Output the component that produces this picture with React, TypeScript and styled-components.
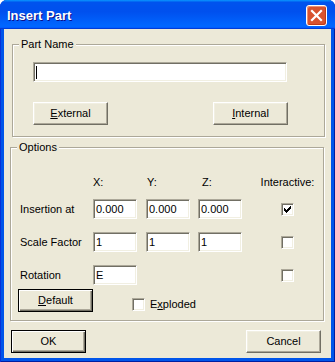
import React from "react";
import styled, { createGlobalStyle, css } from "styled-components";

const GlobalStyle = createGlobalStyle`
  html, body { margin: 0; padding: 0; background: #ffffff; }
  body { font-family: "Liberation Sans", Arial, sans-serif; }
`;

const Window = styled.div`
  width: 335px;
  height: 362px;
  box-sizing: border-box;
  display: flex;
  flex-direction: column;
  background: #0055ea;
  border-radius: 7px 7px 0 0;
  overflow: hidden;
  box-shadow: inset 1px 0 #0831d9, inset -1px 0 #001ea0, inset 0 -1px #001ea0;
`;

const TitleBar = styled.div`
  height: 29px;
  flex: none;
  box-sizing: border-box;
  display: flex;
  align-items: flex-start;
  justify-content: space-between;
  padding: 5px 8px 0 7px;
  background: linear-gradient(
    180deg,
    #0997ff 0,
    #0053ee 8%,
    #0050ee 40%,
    #0066ff 88%,
    #0066ff 93%,
    #005bff 95%,
    #003dd7 96%,
    #003dd7 100%
  );
`;

const Title = styled.span`
  font: bold 13px/21px "Liberation Sans", Arial, sans-serif;
  color: #ffffff;
  text-shadow: 1px 1px #0f1089;
`;

const CloseButton = styled.span`
  width: 21px;
  height: 21px;
  flex: none;
  box-sizing: border-box;
  border: 1px solid #ffffff;
  border-radius: 3px;
  background: #d8532f;
  box-shadow: inset 1px 1px #eb8f73, inset -1px -1px #c03a18;
  display: flex;
  align-items: center;
  justify-content: center;
`;

const Client = styled.div`
  flex: 1;
  margin: 0 4px 4px;
  background: #ece9d8;
  display: flex;
  flex-direction: column;
  padding-top: 9px;
  box-sizing: border-box;
  font-size: 11px;
  line-height: 13px;
  color: #000000;
`;

const Group = styled.fieldset<{ $left: number; $width: number; $top?: number }>`
  margin: ${(p) => p.$top ?? 0}px 0 0 ${(p) => p.$left}px;
  width: ${(p) => p.$width}px;
  min-width: 0;
  box-sizing: border-box;
  padding: 0;
  border: 1px solid #aca899;
  box-shadow: inset 1px 1px #ffffff, 1px 1px #ffffff;
`;

const Legend = styled.legend`
  margin-left: 6px;
  padding: 0 2px;
  font-size: 11px;
  line-height: 13px;
  background: #ece9d8;
`;

const GroupBody = styled.div<{ $pad: string }>`
  padding: ${(p) => p.$pad};
  display: flex;
  flex-direction: column;
`;

const TextBox = styled.div<{ $w: number }>`
  width: ${(p) => p.$w}px;
  height: 20px;
  box-sizing: border-box;
  background: #ffffff;
  border: 1px solid;
  border-color: #aca899 #ffffff #ffffff #aca899;
  box-shadow: inset 1px 1px #716f64, inset -1px -1px #f1efe2;
  padding: 0 2px;
  display: flex;
  align-items: center;
  font-size: 11px;
  white-space: nowrap;
`;

const Caret = styled.span`
  width: 1px;
  height: 13px;
  background: #000000;
`;

const ButtonRow = styled.div<{ $top: number }>`
  display: flex;
  justify-content: space-between;
  margin-top: ${(p) => p.$top}px;
`;

const Button = styled.button<{ $default?: boolean }>`
  width: 75px;
  height: 23px;
  flex: none;
  box-sizing: border-box;
  padding: 0;
  margin: 0;
  font: 11px/13px "Liberation Sans", Arial, sans-serif;
  color: #000000;
  background: #ece9d8;
  border: 1px solid;
  border-color: #ffffff #716f64 #716f64 #ffffff;
  box-shadow: inset -1px -1px #aca899, inset 1px 1px #f1efe2;
  ${(p) =>
    p.$default &&
    css`
      border-color: #000000;
      box-shadow: inset 1px 1px #ffffff, inset -1px -1px #716f64,
        inset -2px -2px #aca899;
    `}
`;

const columns = css`
  display: grid;
  grid-template-columns: 73px 53px 52px 60px 59px;
`;

const HeaderRow = styled.div`
  ${columns};
  margin-bottom: 10px;
`;

const HeaderCell = styled.span<{ $offset?: number; $center?: boolean }>`
  padding-left: ${(p) => p.$offset ?? 0}px;
  text-align: ${(p) => (p.$center ? "center" : "left")};
  white-space: nowrap;
`;

const FieldGrid = styled.div`
  ${columns};
  grid-template-rows: repeat(3, 20px);
  row-gap: 13px;
  align-items: center;
`;

const RowLabel = styled.span`
  grid-column: 1;
  white-space: nowrap;
`;

const Spacer = styled.span<{ $span: number }>`
  grid-column: span ${(p) => p.$span};
`;

const CheckCell = styled.span`
  grid-column: 5;
  justify-self: center;
  display: flex;
`;

const CheckBox = styled.span`
  width: 13px;
  height: 13px;
  box-sizing: border-box;
  flex: none;
  background: #ffffff;
  border: 1px solid;
  border-color: #aca899 #ffffff #ffffff #aca899;
  box-shadow: inset 1px 1px #716f64, inset -1px -1px #f1efe2;
  display: flex;
  align-items: center;
  justify-content: center;
`;

const OptionsFooter = styled.div`
  display: flex;
  align-items: flex-start;
  margin: 4px 0 0 -2px;
`;

const CheckLabel = styled.label`
  display: flex;
  align-items: center;
  gap: 5px;
  margin: 9px 0 0 39px;
`;

const DialogButtons = styled.div`
  display: flex;
  justify-content: space-between;
  padding: 0 10px 0 7px;
  margin-top: 9px;
`;

const CheckMark = () => (
  <svg width="9" height="9" viewBox="0 0 9 9" shapeRendering="crispEdges">
    <path
      d="M1 3h1v3H1z M2 4h1v3H2z M3 5h1v3H3z M4 4h1v3H4z M5 3h1v3H5z M6 2h1v3H6z M7 1h1v3H7z"
      fill="#000"
    />
  </svg>
);

const CloseIcon = () => (
  <svg width="19" height="19" viewBox="0 0 19 19">
    <path d="M5 5 L14 14 M14 5 L5 14" stroke="#ffffff" strokeWidth="2.2" strokeLinecap="square" />
  </svg>
);

const rows = [
  { label: "Insertion at", values: ["0.000", "0.000", "0.000"], checked: true },
  { label: "Scale Factor", values: ["1", "1", "1"], checked: false },
  { label: "Rotation", values: ["E"], checked: false },
];

export default function App() {
  return (
    <>
      <GlobalStyle />
      <Window>
        <TitleBar>
          <Title>Insert Part</Title>
          <CloseButton>
            <CloseIcon />
          </CloseButton>
        </TitleBar>
        <Client>
          <Group $left={8} $width={313}>
            <Legend>Part Name</Legend>
            <GroupBody $pad="11px 36px 11px 20px">
              <TextBox $w={254}>
                <Caret />
              </TextBox>
              <ButtonRow $top={20}>
                <Button>
                  <u>E</u>xternal
                </Button>
                <Button>
                  <u>I</u>nternal
                </Button>
              </ButtonRow>
            </GroupBody>
          </Group>

          <Group $left={6} $width={314} $top={4}>
            <Legend>Options</Legend>
            <GroupBody $pad="22px 0 8px 9px">
              <HeaderRow>
                <span />
                <HeaderCell>X:</HeaderCell>
                <HeaderCell $offset={1}>Y:</HeaderCell>
                <HeaderCell $offset={4}>Z:</HeaderCell>
                <HeaderCell $center>Interactive:</HeaderCell>
              </HeaderRow>
              <FieldGrid>
                {rows.map((r) => (
                  <React.Fragment key={r.label}>
                    <RowLabel>{r.label}</RowLabel>
                    {r.values.map((v, i) => (
                      <TextBox key={i} $w={44}>
                        {v}
                      </TextBox>
                    ))}
                    {r.values.length < 3 && <Spacer $span={3 - r.values.length} />}
                    <CheckCell>
                      <CheckBox>{r.checked && <CheckMark />}</CheckBox>
                    </CheckCell>
                  </React.Fragment>
                ))}
              </FieldGrid>
              <OptionsFooter>
                <Button $default>
                  <u>D</u>efault
                </Button>
                <CheckLabel>
                  <CheckBox />
                  <span>
                    E<u>x</u>ploded
                  </span>
                </CheckLabel>
              </OptionsFooter>
            </GroupBody>
          </Group>

          <DialogButtons>
            <Button $default>OK</Button>
            <Button>Cancel</Button>
          </DialogButtons>
        </Client>
      </Window>
    </>
  );
}
